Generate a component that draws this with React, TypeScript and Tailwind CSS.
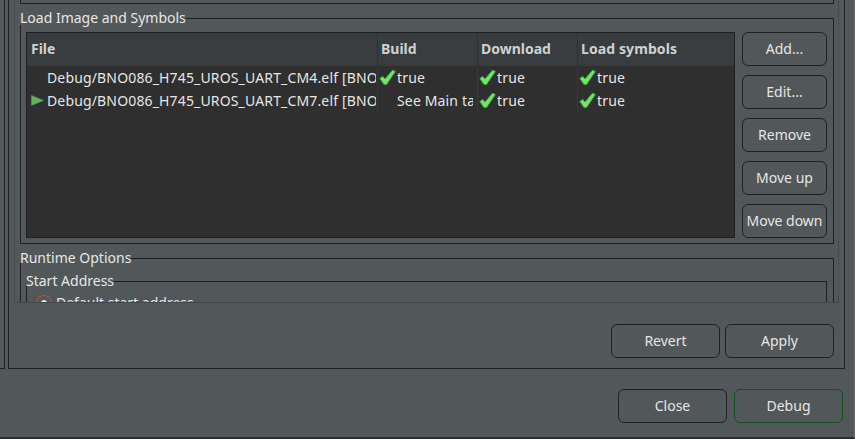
const FONT = "font-['Noto_Sans',sans-serif]";

const SIDE_BUTTONS = ["Add...", "Edit...", "Remove", "Move up", "Move down"];

const ROWS = [
  { file: "Debug/BNO086_H745_UROS_UART_CM4.elf [BNO", active: false, build: "true", buildOk: true },
  { file: "Debug/BNO086_H745_UROS_UART_CM7.elf [BNO", active: true, build: "See Main tab", buildOk: false },
];

function Check() {
  return (
    <svg width="17" height="17" viewBox="0 0 17 17" className="shrink-0">
      <path
        d="M0.8 9.6 L3.6 7.2 L6 10 L13.6 1 L16.4 2.6 L7.6 15.6 L5 15.6 Z"
        fill="#74e466"
        stroke="#3c9a44"
        strokeWidth="1"
        strokeLinejoin="round"
      />
    </svg>
  );
}

function Play() {
  return (
    <svg width="13" height="11" viewBox="0 0 13 11" className="shrink-0">
      <path d="M0.4 0.4 L12.6 5.5 L0.4 10.6 Z" fill="#5cb561" stroke="#4c9a52" strokeWidth="0.6" />
    </svg>
  );
}

function Button({ label, className }: { label: string; className: string }) {
  return (
    <button
      className={`flex h-[34px] items-center justify-center rounded-[6px] border bg-[#52575a] pb-[2px] text-[14px] text-[#e6e6e6] ${className}`}
    >
      {label}
    </button>
  );
}

function GroupTitle({ title, height }: { title: string; height: string }) {
  return (
    <div className={`flex ${height}`}>
      <span className="whitespace-nowrap text-[14px] leading-[20px] text-[#e6e6e6]">{title}</span>
      <div className="mt-[10px] flex-1 border-t border-r border-[#1d2123]" />
    </div>
  );
}

function TrueCell({ last }: { last?: boolean }) {
  return (
    <div className={`flex h-[23px] items-center pl-[1px] ${last ? "" : "border-r border-[#373a3b]"}`}>
      <Check />
      <span className="ml-[1px] text-[14px] tracking-[0.15px] text-[#e6e6e6]">true</span>
    </div>
  );
}

function ImageTable() {
  return (
    <div className="h-[206px] w-[709px] border border-[#1d2123] bg-[#2f2f2f]">
      <div className="grid h-[33px] grid-cols-[351px_100px_100px_1fr] bg-[#383c3e] text-[14px] leading-[31px] font-bold text-[#cfd1d1]">
        <div className="border-r border-[#2e3234] pl-[4px]">File</div>
        <div className="border-r border-[#2e3234] pl-[3px]">Build</div>
        <div className="border-r border-[#2e3234] pl-[3px]">Download</div>
        <div className="pl-[3px] tracking-[0.1px]">Load symbols</div>
      </div>
      {ROWS.map((r) => (
        <div key={r.file} className="grid h-[23px] grid-cols-[351px_100px_100px_1fr]">
          <div className="flex items-center border-r border-[#373a3b] pl-[4px]">
            <div className="w-[16px] shrink-0">{r.active && <Play />}</div>
            <span className="mr-[1px] flex-1 overflow-hidden text-[14px] tracking-[0.15px] whitespace-nowrap text-[#e6e6e6]">
              {r.file}
            </span>
          </div>
          {r.buildOk ? (
            <TrueCell />
          ) : (
            <div className="flex items-center border-r border-[#373a3b] pr-[4px] pl-[19px]">
              <span className="overflow-hidden text-[14px] tracking-[0.15px] whitespace-nowrap text-[#e6e6e6]">{r.build}</span>
            </div>
          )}
          <TrueCell />
          <TrueCell last />
        </div>
      ))}
    </div>
  );
}

export default function App() {
  return (
    <div className={`flex h-[439px] w-[855px] flex-col overflow-hidden border-r border-b-2 border-r-[#6a6e70] border-b-[#2b2f31] bg-[#52575a] ${FONT}`}>
      <div className="flex h-[369px] shrink-0">
        <div className="w-[5px] border-r border-b border-[#1d2123]" />
        <div className="ml-[3px] flex w-[837px] flex-col border-x border-b border-[#1d2123]">
          {/* Scrolled page, cut off by the scroll area's bottom edge */}
          <div className="ml-[5px] h-[303px] w-[825px] shrink-0 overflow-hidden border-x border-b border-x-[#474b4e] border-b-[#43474a] pr-[4px] pl-[5px]">
            <div className="h-[4px] border-x border-b border-[#1d2123]" />

            <div className="mt-[4px]">
              <GroupTitle title="Load Image and Symbols" height="h-[17px]" />
              <div className="flex border-x border-b border-[#1d2123] pt-[7px] pr-[6px] pb-[5px] pl-[5px]">
                <ImageTable />
                <div className="ml-[7px] flex w-[85px] flex-col gap-[9px]">
                  {SIDE_BUTTONS.map((b) => (
                    <Button key={b} label={b} className="border-[#1d2123]" />
                  ))}
                </div>
              </div>
            </div>

            <div className="mt-[4px]">
              <GroupTitle title="Runtime Options" height="h-[15px]" />
              <div className="border-x border-[#1d2123] pt-[8px] pr-[6px] pl-[5px]">
                <GroupTitle title="Start Address" height="h-[15px]" />
                <div className="h-[60px] border-x border-[#1d2123] pt-[9px] pl-[9px]">
                  <div className="flex items-start gap-[4px]">
                    <div className="flex h-[16px] w-[16px] items-center justify-center rounded-full border-[1.5px] border-[#c9502b]">
                      <div className="h-[6px] w-[6px] rounded-full bg-[#e6e6e6]" />
                    </div>
                    <span className="text-[14px] leading-[16px] text-[#e6e6e6]">Default start address</span>
                  </div>
                </div>
              </div>
            </div>
          </div>

          <div className="mt-[21px] flex justify-end gap-[5px] pr-[10px]">
            <Button label="Revert" className="w-[109px] border-[#1d2123]" />
            <Button label="Apply" className="w-[109px] border-[#1d2123]" />
          </div>
        </div>
      </div>

      <div className="mt-[20px] flex justify-end gap-[7px] pr-[11px]">
        <Button label="Close" className="w-[109px] border-[#1d2123]" />
        <Button label="Debug" className="w-[109px] border-[#14501c]" />
      </div>
    </div>
  );
}
